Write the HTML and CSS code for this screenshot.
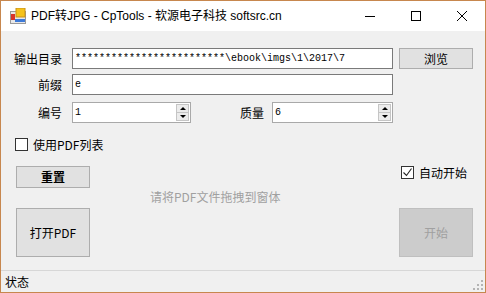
FILE: index.html
```html
<!DOCTYPE html>
<html>
<head>
    <title>PDF转JPG - CpTools</title>
    <link rel="stylesheet" href="styles.css">
</head>
<body>
    <div class="window">
        <div class="titlebar">
            <svg class="app-icon" width="16" height="16" viewBox="0 0 16 16">
                <rect x="0.5" y="3.5" width="15" height="12" fill="#e8e8e8" stroke="#9a9a9a"/>
                <rect x="6" y="0" width="9" height="9" fill="#f5c21b" stroke="#c7901a"/>
                <rect x="1" y="6" width="4" height="6" fill="#d8342a"/>
                <rect x="5" y="11" width="10" height="3" fill="#3d7ad8"/>
            </svg>
            <span class="title">PDF转JPG - CpTools - 软源电子科技 softsrc.cn</span>
            <div class="caption-buttons">
                <div class="caption-btn">
                    <svg width="10" height="10" viewBox="0 0 10 10"><path d="M0 5.5h10" stroke="#000"/></svg>
                </div>
                <div class="caption-btn">
                    <svg width="10" height="10" viewBox="0 0 10 10"><rect x="0.5" y="0.5" width="9" height="9" fill="none" stroke="#000"/></svg>
                </div>
                <div class="caption-btn">
                    <svg width="10" height="10" viewBox="0 0 10 10"><path d="M0 0L10 10M10 0L0 10" stroke="#000"/></svg>
                </div>
            </div>
        </div>

        <div class="client">
            <div class="row row-first">
                <span class="label">输出目录</span>
                <input class="textbox wide" type="text" value="*************************\ebook\imgs\1\2017\7">
                <button class="btn browse">浏览</button>
            </div>
            <div class="row row-second">
                <span class="label">前缀</span>
                <input class="textbox wide" type="text" value="e">
            </div>
            <div class="row row-third">
                <span class="label">编号</span>
                <div class="numeric num-index">
                    <span class="num-value">1</span>
                    <div class="spinner">
                        <span class="spin-up"></span>
                        <span class="spin-down"></span>
                    </div>
                </div>
                <span class="label-quality">质量</span>
                <div class="numeric num-quality">
                    <span class="num-value">6</span>
                    <div class="spinner">
                        <span class="spin-up"></span>
                        <span class="spin-down"></span>
                    </div>
                </div>
            </div>

            <div class="lower">
                <div class="left-col">
                    <label class="check">
                        <span class="check-box"></span>
                        <span>使用PDF列表</span>
                    </label>
                    <button class="btn reset">重置</button>
                    <button class="btn big">打开PDF</button>
                </div>
                <div class="hint">请将PDF文件拖拽到窗体</div>
                <div class="right-col">
                    <label class="check">
                        <span class="check-box">
                            <svg width="11" height="11" viewBox="0 0 11 11"><path d="M1.5 5.5l3 3 5-7" fill="none" stroke="#222" stroke-width="1.1"/></svg>
                        </span>
                        <span>自动开始</span>
                    </label>
                    <button class="btn big disabled">开始</button>
                </div>
            </div>

            <div class="statusbar">
                <span class="status-text">状态</span>
                <svg class="grip" width="11" height="11" viewBox="0 0 11 11">
                    <rect x="8" y="0" width="2" height="2" fill="#b4b4b4"/>
                    <rect x="4" y="4" width="2" height="2" fill="#b4b4b4"/>
                    <rect x="8" y="4" width="2" height="2" fill="#b4b4b4"/>
                    <rect x="0" y="8" width="2" height="2" fill="#b4b4b4"/>
                    <rect x="4" y="8" width="2" height="2" fill="#b4b4b4"/>
                    <rect x="8" y="8" width="2" height="2" fill="#b4b4b4"/>
                </svg>
            </div>
        </div>
    </div>
</body>
</html>
```

FILE: styles.css
```css
:root {
    --frame-color: #c7874e;
    --client-bg: #f0f0f0;
    --box-border: #7a7a7a;
    --btn-bg: #e1e1e1;
    --btn-border: #adadad;
    --text-color: #000000;
    --hint-color: #a0a0a0;
}

* {
    box-sizing: border-box;
}

body {
    margin: 0;
    font-family: "Noto Sans CJK SC", "Liberation Sans", sans-serif;
    font-size: 12px;
    color: var(--text-color);
}

.window {
    width: 486px;
    height: 293px;
    border: 1px solid var(--frame-color);
    background-color: var(--client-bg);
    display: flex;
    flex-direction: column;
}

/* title bar */
.titlebar {
    height: 30px;
    background-color: #ffffff;
    display: flex;
    align-items: center;
    flex-shrink: 0;
}

.app-icon {
    margin-left: 9px;
    margin-top: -1px;
}

.title {
    margin-left: 5px;
    font-family: "Liberation Sans", "Noto Sans CJK SC", sans-serif;
    font-size: 12px;
    line-height: 16px;
    margin-top: -1px;
}

.caption-buttons {
    margin-left: auto;
    display: flex;
    height: 30px;
}

.caption-btn {
    width: 46px;
    height: 30px;
    display: flex;
    align-items: center;
    justify-content: center;
}

/* client area */
.client {
    flex: 1;
    display: flex;
    flex-direction: column;
}

.row {
    display: flex;
    align-items: center;
    height: 21px;
    padding-left: 13px;
}

.row-first {
    margin-top: 17px;
}

.row-second {
    margin-top: 5px;
}

.row-third {
    margin-top: 7px;
}

.label {
    width: 48px;
    margin-right: 10px;
    text-align: right;
    line-height: 14px;
}

.textbox {
    height: 21px;
    border: 1px solid var(--box-border);
    background-color: #ffffff;
    padding: 0 2px;
    font-family: "Liberation Mono", "DejaVu Sans Mono", monospace;
    font-size: 10px;
    color: var(--text-color);
    outline: none;
}

.wide {
    width: 321px;
}

.btn {
    background-color: var(--btn-bg);
    border: 1px solid var(--btn-border);
    font-family: "Noto Sans CJK SC", sans-serif;
    font-size: 12px;
    color: var(--text-color);
    padding: 0;
    line-height: 14px;
}

.browse {
    width: 74px;
    height: 21px;
    margin-left: 6px;
}

/* numeric up/down */
.numeric {
    height: 21px;
    border: 1px solid #a9a9a9;
    background-color: #ffffff;
    display: flex;
    align-items: center;
    justify-content: space-between;
    padding: 1px 1px 1px 2px;
}

.num-index {
    width: 119px;
}

.num-quality {
    width: 121px;
}

.num-value {
    font-family: "Liberation Mono", monospace;
    font-size: 10px;
}

.label-quality {
    margin-left: 49px;
    width: 26px;
    margin-right: 6px;
    line-height: 14px;
}

.spinner {
    width: 13px;
    height: 17px;
    display: flex;
    flex-direction: column;
    border: 1px solid #c5c5c5;
    background-color: #ececec;
}

.spin-up,
.spin-down {
    flex: 1;
    display: flex;
    align-items: center;
    justify-content: center;
}

.spin-up {
    border-bottom: 1px solid #c5c5c5;
}

.spin-up::after {
    content: "";
    border-left: 3px solid transparent;
    border-right: 3px solid transparent;
    border-bottom: 3px solid #000;
}

.spin-down::after {
    content: "";
    border-left: 3px solid transparent;
    border-right: 3px solid transparent;
    border-top: 3px solid #000;
}

/* lower area */
.lower {
    display: flex;
    padding-left: 14px;
}

.left-col {
    width: 135px;
    display: flex;
    flex-direction: column;
    align-items: flex-start;
}

.check {
    display: flex;
    align-items: center;
    height: 13px;
    line-height: 14px;
}

.check-box {
    width: 13px;
    height: 13px;
    border: 1px solid #333333;
    background-color: #ffffff;
    margin-right: 5px;
    display: flex;
    align-items: center;
    justify-content: center;
}

.left-col .check {
    margin-top: 15px;
}

.reset {
    width: 74px;
    height: 22px;
    margin-top: 15px;
    margin-left: 1px;
    font-weight: bold;
}

.big {
    width: 74px;
    height: 49px;
}

.left-col .big {
    margin-top: 20px;
    margin-left: 1px;
}

.hint {
    flex: 1;
    padding-top: 67px;
    line-height: 14px;
    color: var(--hint-color);
}

.right-col {
    width: 74px;
    margin-right: 12px;
    display: flex;
    flex-direction: column;
}

.right-col .check {
    margin-top: 43px;
    margin-left: 2px;
}

.right-col .big {
    margin-top: 29px;
}

.disabled {
    background-color: #cccccc;
    border-color: #bfbfbf;
    color: var(--hint-color);
}

/* status strip */
.statusbar {
    margin-top: auto;
    height: 22px;
    border-top: 1px solid #d7d7d7;
    display: flex;
    align-items: center;
    padding-left: 4px;
}

.status-text {
    line-height: 14px;
}

.grip {
    margin-left: auto;
    margin-right: 1px;
    align-self: flex-end;
    margin-bottom: 1px;
}
```
